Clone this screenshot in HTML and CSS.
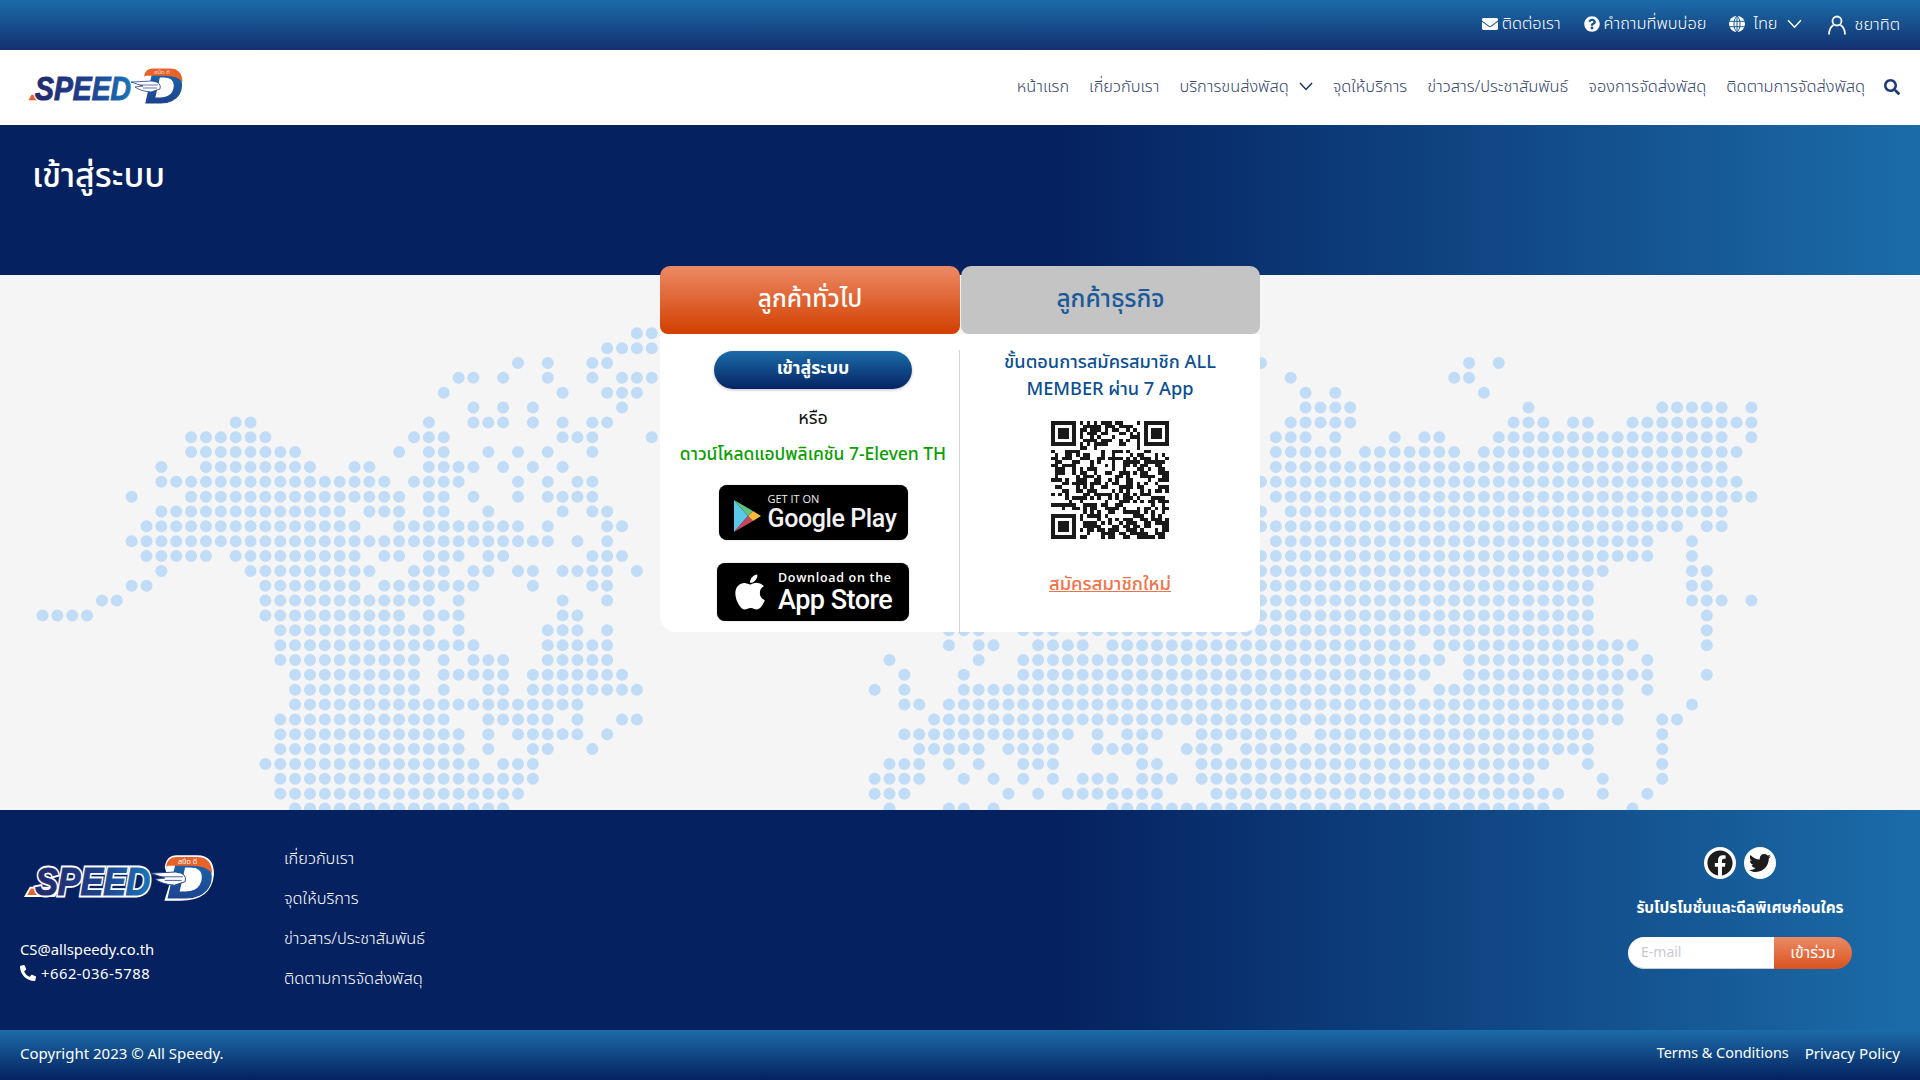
FILE: index.html
```html
<!DOCTYPE html>
<html lang="th">
<head>
<meta charset="utf-8">
<title>เข้าสู่ระบบ - Speed-D</title>
<link rel="stylesheet" href="styles.css">
</head>
<body>
<svg class="defs" width="0" height="0" aria-hidden="true">
  <defs>
    <linearGradient id="lg" x1="0" y1="0" x2="1" y2="0"><stop offset="0" stop-color="#222a6a"/><stop offset=".55" stop-color="#1d3f8c"/><stop offset="1" stop-color="#1a74b8"/></linearGradient>
    <linearGradient id="lg2" x1="0" y1="0" x2="0" y2="1"><stop offset="0" stop-color="#1a70b4"/><stop offset="1" stop-color="#1d3a86"/></linearGradient>
    <symbol id="logo" viewBox="0 0 160 38">
      <path d="M120 10 Q121 1 129 1 H146 Q159 1 159 16 Q157 37 132 37 H120 L124 24Z" fill="#fff" stroke="#fff" stroke-width="2"/>
      <text class="logo-d" x="121" y="35.500" textLength="38" lengthAdjust="spacingAndGlyphs">D</text>
      <path d="M120 9.500 Q121 1.500 129 1.500 H146 Q158 1.500 158.500 15 Q153 8.500 140 8.800 H122Z" fill="#e8622a"/>
      <text class="logo-th" x="130" y="7.300">สปีด ดี</text>
      <path d="M3 34 L7 27 H31 L27 34Z" fill="#e8622a" stroke="#fff" stroke-width="1.600"/>
      <text class="logo-edge" x="11" y="33" textLength="96" lengthAdjust="spacingAndGlyphs">SPEED</text>
      <text class="logo-word" x="11" y="33" textLength="96" lengthAdjust="spacingAndGlyphs">SPEED</text>
      <path d="M107 15 L128 14 Q138 15 136 22 L127 25 Q116 24 111 20 L119 19Z" fill="#fff" stroke="#25408a" stroke-width=".8"/>
      <path d="M116 18 L134 18 M119 21 L133 21" stroke="#25408a" stroke-width=".7" fill="none"/>
    </symbol>
  </defs>
</svg>

<header class="topbar">
  <a class="top-item"><svg class="ic" viewBox="0 0 512 512"><path d="M502.300 190.800c3.900-3.100 9.700-.2 9.700 4.700V400c0 26.500-21.500 48-48 48H48c-26.500 0-48-21.500-48-48V195.600c0-5 5.700-7.800 9.700-4.700 22.400 17.400 52.100 39.500 154.100 113.600 21.100 15.400 56.700 47.800 92.200 47.600 35.700.3 72-32.800 92.300-47.600 102-74.100 131.600-96.300 154-113.700zM256 320c23.200.4 56.600-29.200 73.400-41.400 132.700-96.300 142.800-104.700 173.400-128.700 5.800-4.500 9.200-11.500 9.200-18.900v-19c0-26.500-21.500-48-48-48H48C21.500 64 0 85.500 0 112v19c0 7.400 3.400 14.300 9.200 18.900 30.600 23.900 40.700 32.400 173.400 128.700 16.800 12.200 50.200 41.800 73.400 41.400z"/></svg>ติดต่อเรา</a>
  <a class="top-item"><svg class="ic" viewBox="0 0 512 512"><path d="M504 256c0 136.997-111.043 248-248 248S8 392.997 8 256C8 119.083 119.043 8 256 8s248 111.083 248 248zM262.655 90c-54.497 0-89.255 22.957-116.549 63.758-3.536 5.286-2.353 12.415 2.715 16.258l34.699 26.310c5.205 3.947 12.621 3.008 16.665-2.122 17.864-22.658 30.113-35.797 57.303-35.797 20.429 0 45.698 13.148 45.698 32.958 0 14.976-12.363 22.667-32.534 33.976C247.128 238.528 216 254.941 216 296v4c0 6.627 5.373 12 12 12h56c6.627 0 12-5.373 12-12v-1.333c0-28.462 83.186-29.647 83.186-106.667 0-58.002-60.165-102-116.531-102zM256 338c-25.365 0-46 20.635-46 46 0 25.364 20.635 46 46 46s46-20.636 46-46c0-25.365-20.635-46-46-46z"/></svg>คำถามที่พบบ่อย</a>
  <a class="top-item lang"><svg class="ic" viewBox="0 0 16 16"><circle cx="8" cy="8" r="8"/><path d="M0 5.300h16M0 10.700h16M8 0v16M8 0C4 3 4 13 8 16M8 0c4 3 4 13 0 16" fill="none" stroke="#1a5a96" stroke-width="1"/></svg><span class="lang-name">ไทย</span><svg class="chev" viewBox="0 0 14 9"><path d="M1 1l6 6.500L13 1"/></svg></a>
  <a class="top-item user"><svg class="ic-user" viewBox="0 0 18 20"><circle cx="9" cy="6" r="4.500"/><path d="M1 19.500c0-6 3-8.500 4.500-9.500M17 19.500c0-6-3-8.500-4.500-9.500"/></svg>ชยาทิต</a>
</header>

<nav class="mainnav">
  <a class="brand"><svg class="logo-head"><use href="#logo"/></svg></a>
  <div class="menu">
    <a>หน้าแรก</a>
    <a>เกี่ยวกับเรา</a>
    <a class="has-sub">บริการขนส่งพัสดุ<svg class="chev-dark" viewBox="0 0 14 9"><path d="M1 1l6 6.500L13 1"/></svg></a>
    <a>จุดให้บริการ</a>
    <a>ข่าวสาร/ประชาสัมพันธ์</a>
    <a>จองการจัดส่งพัสดุ</a>
    <a>ติดตามการจัดส่งพัสดุ</a>
    <svg class="search" viewBox="0 0 512 512"><path d="M505 442.700L405.300 343c-4.500-4.500-10.600-7-17-7H372c27.600-35.300 44-79.700 44-128C416 93.100 322.900 0 208 0S0 93.100 0 208s93.100 208 208 208c48.300 0 92.700-16.400 128-44v16.300c0 6.400 2.500 12.500 7 17l99.700 99.700c9.400 9.400 24.600 9.400 33.900 0l28.300-28.300c9.400-9.400 9.400-24.600.1-34zM208 336c-70.700 0-128-57.200-128-128 0-70.700 57.200-128 128-128 70.700 0 128 57.200 128 128 0 70.700-57.200 128-128 128z"/></svg>
  </div>
</nav>

<section class="banner"><h1>เข้าสู่ระบบ</h1></section>

<main class="stage">
  <svg id="worldmap" class="worldmap" aria-hidden="true"></svg>
  <div class="card">
    <div class="tabs">
      <div class="tab tab-on">ลูกค้าทั่วไป</div>
      <div class="tab tab-off">ลูกค้าธุรกิจ</div>
    </div>
    <div class="panes">
      <div class="pane pane-left">
        <a class="btn-login">เข้าสู่ระบบ</a>
        <p class="or">หรือ</p>
        <p class="dl">ดาวน์โหลดแอปพลิเคชัน 7-Eleven TH</p>
        <a class="badge badge-gp">
          <svg class="gp-ic" viewBox="0 0 27 34"><path d="M0 1L14 17 0 33Z" fill="#5cc8e8"/><path d="M0 1L19 12 14 17Z" fill="#5fc47e"/><path d="M0 33L19 22 14 17Z" fill="#c8455f"/><path d="M19 12L27 17 19 22 14 17Z" fill="#f6b93b"/></svg>
          <span class="gp-t"><small>GET IT ON</small><b>Google Play</b></span>
        </a>
        <a class="badge badge-as">
          <svg class="as-ic" viewBox="0 0 384 512"><path d="M318.700 268.700c-.2-36.700 16.400-64.400 50-84.800-18.800-26.900-47.200-41.700-84.700-44.600-35.500-2.800-74.300 20.700-88.500 20.700-15 0-49.400-19.700-76.400-19.700C63.300 141.200 4 184.800 4 273.500q0 39.300 14.400 81.200c12.800 36.700 59 126.700 107.200 125.200 25.200-.6 43-17.900 75.800-17.900 31.800 0 48.300 17.900 76.400 17.900 48.600-.7 90.400-82.500 102.600-119.300-65.200-30.700-61.700-90-61.700-91.900zm-56.600-164.200c27.300-32.400 24.800-61.900 24-72.500-24.100 1.400-52 16.400-67.900 34.900-17.500 19.800-27.800 44.300-25.600 71.900 26.100 2 49.900-11.400 69.500-34.300z"/></svg>
          <span class="as-t"><small>Download on the</small><b>App Store</b></span>
        </a>
      </div>
      <div class="pane pane-right">
        <p class="steps">ขั้นตอนการสมัครสมาชิก ALL MEMBER ผ่าน 7 App</p>
        <svg id="qr" class="qr" viewBox="0 0 33 33" shape-rendering="crispEdges" aria-label="QR"></svg>
        <a class="signup">สมัครสมาชิกใหม่</a>
      </div>
    </div>
  </div>
</main>

<footer class="foot">
  <div class="foot-brand">
    <svg class="logo-foot"><use href="#logo"/></svg>
    <div class="contact">
      <p>CS@allspeedy.co.th</p>
      <p class="tel"><svg class="ic-tel" viewBox="0 0 512 512"><path d="M497.390 361.800l-112-48a24 24 0 0 0-28 6.900l-49.600 60.600A370.660 370.660 0 0 1 130.600 204.110l60.600-49.600a23.940 23.940 0 0 0 6.900-28l-48-112A24.160 24.160 0 0 0 122.600.61l-104 24A24 24 0 0 0 0 48c0 256.500 207.900 464 464 464a24 24 0 0 0 23.400-18.600l24-104a24.290 24.290 0 0 0-14.010-27.600z"/></svg>+662-036-5788</p>
    </div>
  </div>
  <div class="foot-links">
    <a>เกี่ยวกับเรา</a>
    <a>จุดให้บริการ</a>
    <a>ข่าวสาร/ประชาสัมพันธ์</a>
    <a>ติดตามการจัดส่งพัสดุ</a>
  </div>
  <div class="foot-side">
    <div class="socials">
      <span class="soc"><svg viewBox="0 0 512 512"><path d="M504 256C504 119 393 8 256 8S8 119 8 256c0 123.780 90.690 226.380 209.250 245V327.690h-63V256h63v-54.640c0-62.150 37-96.480 93.670-96.480 27.140 0 55.520 4.840 55.520 4.840v61h-31.280c-30.800 0-40.410 19.120-40.410 38.730V256h68.780l-11 71.690h-57.780V501C413.310 482.380 504 379.780 504 256z"/></svg></span>
      <span class="soc soc-tw"><svg viewBox="0 0 512 512"><path d="M459.370 151.716c.325 4.548.325 9.097.325 13.645 0 138.720-105.583 298.558-298.558 298.558-59.452 0-114.680-17.219-161.137-47.106 8.447.974 16.568 1.299 25.340 1.299 49.055 0 94.213-16.568 130.274-44.832-46.132-.975-84.792-31.188-98.112-72.772 6.498.974 12.995 1.624 19.818 1.624 9.421 0 18.843-1.300 27.614-3.573-48.081-9.747-84.143-51.980-84.143-102.985v-1.299c13.969 7.797 30.214 12.670 47.431 13.319-28.264-18.843-46.781-51.005-46.781-87.391 0-19.492 5.197-37.360 14.294-52.954 51.655 63.675 129.300 105.258 216.365 109.807-1.624-7.797-2.599-15.918-2.599-24.040 0-57.828 46.782-104.934 104.934-104.934 30.213 0 57.502 12.670 76.670 33.137 23.715-4.548 46.456-13.320 66.599-25.340-7.798 24.366-24.366 44.833-46.132 57.827 21.117-2.273 41.584-8.122 60.426-16.243-14.292 20.791-32.161 39.308-52.628 54.253z"/></svg></span>
    </div>
    <p class="promo">รับโปรโมชั่นและดีลพิเศษก่อนใคร</p>
    <div class="subscribe"><span class="email">E-mail</span><span class="join">เข้าร่วม</span></div>
  </div>
</footer>

<div class="legal">
  <span>Copyright 2023 © All Speedy.</span>
  <span class="legal-links"><a>Terms &amp; Conditions</a><a class="privacy">Privacy Policy</a></span>
</div>
<script src="map.js"></script>
</body>
</html>
```
FILE: styles.css
```css
* { box-sizing: border-box; }
html, body { margin: 0; padding: 0; }
body {
  width: 1920px;
  height: 1080px;
  overflow: hidden;
  font-family: "Noto Sans", "Noto Sans Thai", "Liberation Sans", sans-serif;
  font-size: 16px;
  color: #fff;
  background: #f5f5f5;
}
p, h1 { margin: 0; }
.defs { position: absolute; }

/* top bar */
.topbar {
  height: 50px;
  display: flex;
  justify-content: flex-end;
  align-items: center;
  gap: 23px;
  padding: 0 20px 3px 0;
  background: linear-gradient(180deg, #1b6ca9 0%, #13306f 100%);
  font-size: 16.400px;
  font-weight: 300;
}
.top-item { display: flex; align-items: center; gap: 4px; white-space: nowrap; }
.ic { width: 16px; height: 16px; fill: #fff; }
.lang { gap: 8px; }
.lang-name { margin-right: 1px; }
.chev { width: 15px; height: 10px; fill: none; stroke: #fff; stroke-width: 1.300; margin-right: 3px; }
.ic-user { width: 18px; height: 20px; fill: none; stroke: #fff; stroke-width: 1.800; margin-right: 9px; }
.user { gap: 0; margin-top: 2px; }

/* main navigation */
.mainnav {
  height: 75px;
  background: #fff;
  display: flex;
  align-items: center;
  justify-content: space-between;
  padding: 0 20px 2px 24px;
  color: #35456e;
  font-size: 16.400px;
  font-weight: 300;
}
.brand { display: block; height: 40px; }
.logo-head { width: 160px; height: 38px; display: block; }
.menu { display: flex; align-items: center; gap: 20px; white-space: nowrap; }
.has-sub { display: flex; align-items: center; gap: 10px; }
.chev-dark { width: 14px; height: 9px; fill: none; stroke: #1f3269; stroke-width: 1.500; }
.search { width: 16px; height: 16px; fill: #1a3a78; margin-left: -1px; }

/* banner */
.banner {
  height: 150px;
  padding: 26px 32px 0;
  background: linear-gradient(90deg, #05215f 55%, #1b6ca9 100%);
}
.banner h1 { font-size: 34px; font-weight: 500; line-height: 46px; }

/* content stage */
.stage { position: relative; height: 535px; overflow: visible; }
.worldmap { position: absolute; left: 0; top: 0; width: 1920px; height: 535px; fill: #c0dcf7; }
.card {
  position: relative;
  width: 600px;
  margin: 0 auto;
  top: -9px;
}
.tabs { display: flex; gap: 1px; height: 68px; }
.tab {
  display: flex;
  align-items: center;
  justify-content: center;
  font-size: 24.500px;
  font-weight: 500;
  border-radius: 10px 10px 8px 8px;
}
.tab-on { width: 300px; padding-bottom: 2px; background: linear-gradient(180deg, #ec8a65 0%, #d23f00 100%); color: #fff; }
.tab-off { width: 299px; padding-bottom: 2px; background: #c4c4c4; color: #1a5a9a; }
.panes {
  display: flex;
  height: 298px;
  background: #fff;
  border-radius: 0 0 16px 16px;
}
.pane { flex: 1; display: flex; flex-direction: column; align-items: center; }
.pane-left { width: 300px; flex: none; padding-top: 17px; position: relative; }
.pane-left::after {
  content: "";
  position: absolute;
  right: 0;
  top: 16px;
  bottom: 0;
  width: 1px;
  background: #d4d4d4;
}
.btn-login {
  width: 198px;
  height: 38px;
  border-radius: 19px;
  background: linear-gradient(180deg, #1b6ca9 0%, #052363 100%);
  box-shadow: 0 1px 3px rgba(0, 0, 0, .25);
  display: flex;
  align-items: center;
  justify-content: center;
  font-size: 17.800px;
  font-weight: 700;
  padding-bottom: 3px;
  margin-left: 6px;
}
.or { color: #111; font-size: 18px; line-height: 24px; margin: 16px 0 0 6px; }
.dl { color: #0aa000; font-size: 17.450px; font-weight: 500; line-height: 24px; margin: 12px 0 0 6px; white-space: nowrap; }
.badge {
  background: #000;
  border-radius: 8px;
  display: flex;
  align-items: center;
  margin-left: 6px;
  box-shadow: 0 0 1px rgba(0, 0, 0, .6);
}
.badge small, .badge b { display: block; font-family: "Open Sans", "Liberation Sans", sans-serif; }
.badge-gp { width: 189px; height: 55px; margin-top: 20px; padding-left: 15px; gap: 7px; }
.gp-ic { width: 27px; height: 34px; margin-top: 6px; }
.gp-t small { font-size: 11px; line-height: 12px; color: #eee; }
.gp-t b { font-size: 25px; line-height: 28px; font-weight: 500; letter-spacing: -.4px; font-family: "Roboto", sans-serif; color: #f2f2f2; }
.badge-as { width: 192px; height: 58px; margin-top: 23px; padding-left: 17px; gap: 12px; }
.as-ic { width: 32px; height: 40px; fill: #fff; }
.as-t small { font-size: 12.500px; line-height: 15px; letter-spacing: .7px; font-weight: 600; }
.as-t b { font-size: 27px; line-height: 30px; font-weight: 500; letter-spacing: -.5px; font-family: "Roboto", sans-serif; }
.pane-right { padding: 14px 10px 0; }
.steps { color: #0a4f92; font-size: 18.200px; font-weight: 500; line-height: 27px; text-align: center; }
.qr { width: 118px; height: 118px; margin-top: 19px; display: block; }
.signup { color: #f2734a; font-size: 18.400px; font-weight: 500; text-decoration: underline; margin-top: 31px; }

/* footer */
.foot {
  height: 220px;
  position: relative;
  display: flex;
  padding: 0 20px;
  background: linear-gradient(90deg, #05215f 55%, #1b6ca9 100%);
}
.foot-brand { width: 264px; padding-top: 45px; }
.logo-foot { width: 192px; height: 46px; display: block; margin-left: 2px; }
.contact { margin-top: 36px; font-size: 14.800px; line-height: 24px; }
.tel { display: flex; align-items: center; gap: 5px; letter-spacing: .5px; }
.ic-tel { width: 16px; height: 16px; fill: #fff; }
.foot-links { display: flex; flex-direction: column; gap: 16px; padding-top: 36px; font-size: 16.400px; line-height: 24px; font-weight: 300; }
.foot-side { margin-left: auto; width: 224px; margin-right: 48px; display: flex; flex-direction: column; align-items: center; padding-top: 37px; }
.socials { display: flex; gap: 8px; }
.soc { width: 32px; height: 32px; border-radius: 50%; background: #fff; display: flex; align-items: center; justify-content: center; }
.soc svg { width: 26px; height: 26px; fill: #1c1c1c; }
.soc-tw svg { width: 22px; height: 22px; }
.promo { font-size: 15.400px; font-weight: 700; line-height: 24px; margin-top: 17px; white-space: nowrap; }
.subscribe { display: flex; width: 224px; height: 32px; margin-top: 17px; }
.email { width: 146px; background: #fff; border-radius: 16px 0 0 16px; color: #c9c9d6; padding-left: 13px; font-size: 14px; line-height: 30px; border-bottom: 1px solid #ccc; }
.join { width: 78px; background: linear-gradient(180deg, #ec8a65 0%, #d9541f 100%); border-radius: 0 16px 16px 0; text-align: center; font-size: 16px; line-height: 30px; }

/* legal bar */
.legal {
  height: 50px;
  display: flex;
  justify-content: space-between;
  align-items: center;
  padding: 0 20px 4px;
  font-size: 15px;
  background: linear-gradient(180deg, #1b6ca9 0%, #05215f 100%);
}
.legal-links { display: flex; gap: 16px; font-size: 14.400px; }
.privacy { font-size: 15.100px; }

/* logo text */
.logo-edge { font: italic 700 33px "Liberation Sans", sans-serif; fill: #fff; stroke: #fff; stroke-width: 4px; }
.logo-word { font: italic 700 33px "Liberation Sans", sans-serif; fill: url(#lg); stroke: url(#lg); stroke-width: 1px; }
.logo-d { font: italic 700 44px "Liberation Sans", sans-serif; fill: url(#lg2); stroke: url(#lg2); stroke-width: 1px; }
.logo-th { font-size: 6px; fill: #fff; }
```
FILE: map.js
```js
// Dotted world map and QR pattern.
// Each row: list of "from-to" (or single) column indexes of the 14.86px dot grid.
var ROWS = [
"40-41","38-41","32 34 37 38 82 96 98","28 29 31 34 37 39-41 84 95 96","27 35 38-40 85 87 97",
"29 31 33 39 85-88 100 109-113 115","13 14 26 29-31 33 35 37 38 84-88 99-101 103 104 107-115",
"10-15 25-27 35-37 41 83-85 87 91 93 94 98-113 115","10-17 24 26 27 30 32 34 37 83-87 89-95 97-114",
"8 11-18 21 22 26-29 31 33 35 83-113","8-23 25-28 32 34 36 37 82-114","6 10-24 26 27 29 32 34-37 83-115",
"8-20 22-24 26 27 30 35 37 38 82 84-113","7-21 24-32 34 38 39 82-110 112 113","6-34 36 38 83-108 111",
"7-11 13-21 23 24 26-28 30 31 37-39 82-108 111","8 14-22 25-27 29 30 32 33 35-38 40 82-105 111 112",
"6 7 15-21 23-29 33 37 38 82-104 111 112","4 5 15-26 28 35 38 82-104 111-113 115","0-3 15-24 26-28 35 36 82-104 112",
"16-26 28 34-36 38 61-63 66-68 70-104 112","16-29 34-38 61 63 64 67-70 72-92 94-107 112",
"16-25 27 29-31 34-38 57 63 66-94 96-106 108","17-25 27-31 33-39 58 62 66-93 96-108 112",
"17-25 27 30 31 33-40 56 58 62-92 94-106 108","17-36 58 59 61-106 111","16-27 30-34 36 39 40 60-106 109 110",
"16-28 30 32-36 38 58-69 71 73-75 78-84 86-104 109","16-28 30 33 34 37 59-63 65-68 71-74 77-79 81-104 109",
"15-29 31-33 57-59 61 63 66-68 74 75 78-101 104 109","16-33 56-59 62 64 66 68 70-72 74-76 78-100 105 109",
"16-32 56-58 65 67 69-75 79-102 105 108","17-31 57 61 62 64 72-101 107"
];
var NS = "http://www.w3.org/2000/svg";
var map = document.getElementById("worldmap");
var d = "";
ROWS.forEach(function (row, r) {
  row.split(" ").forEach(function (part) {
    var p = part.split("-"), a = +p[0], b = +(p[1] || p[0]);
    for (var c = a; c <= b; c++) {
      var x = (42.5 + 14.86 * c).toFixed(2), y = (58.3 + 14.85 * r).toFixed(2);
      d += "M" + (x - 6) + " " + y + "a6 6 0 1 0 12 0a6 6 0 1 0-12 0";
    }
  });
});
var path = document.createElementNS(NS, "path");
path.setAttribute("d", d);
map.appendChild(path);

// QR: finder patterns plus a fixed pseudo-random module field
var qr = document.getElementById("qr"), N = 33, seed = 20231, q = "";
function inFinder(x, y) { return (x < 8 && y < 8) || (x > N - 9 && y < 8) || (x < 8 && y > N - 9); }
function finder(x, y) {
  return "M" + x + " " + y + "h7v7h-7zM" + (x + 1) + " " + (y + 1) + "v5h5v-5zM" + (x + 2) + " " + (y + 2) + "h3v3h-3z";
}
for (var y = 0; y < N; y++) for (var x = 0; x < N; x++) {
  seed = (seed * 1103515245 + 12345) % 2147483648;
  if (!inFinder(x, y) && (seed >> 16) % 100 < 50) q += "M" + x + " " + y + "h1v1h-1z";
}
var qp = document.createElementNS(NS, "path");
qp.setAttribute("d", q + finder(0, 0) + finder(26, 0) + finder(0, 26));
qp.setAttribute("fill", "#1a1a1a");
qp.setAttribute("fill-rule", "evenodd");
qr.appendChild(qp);
```
